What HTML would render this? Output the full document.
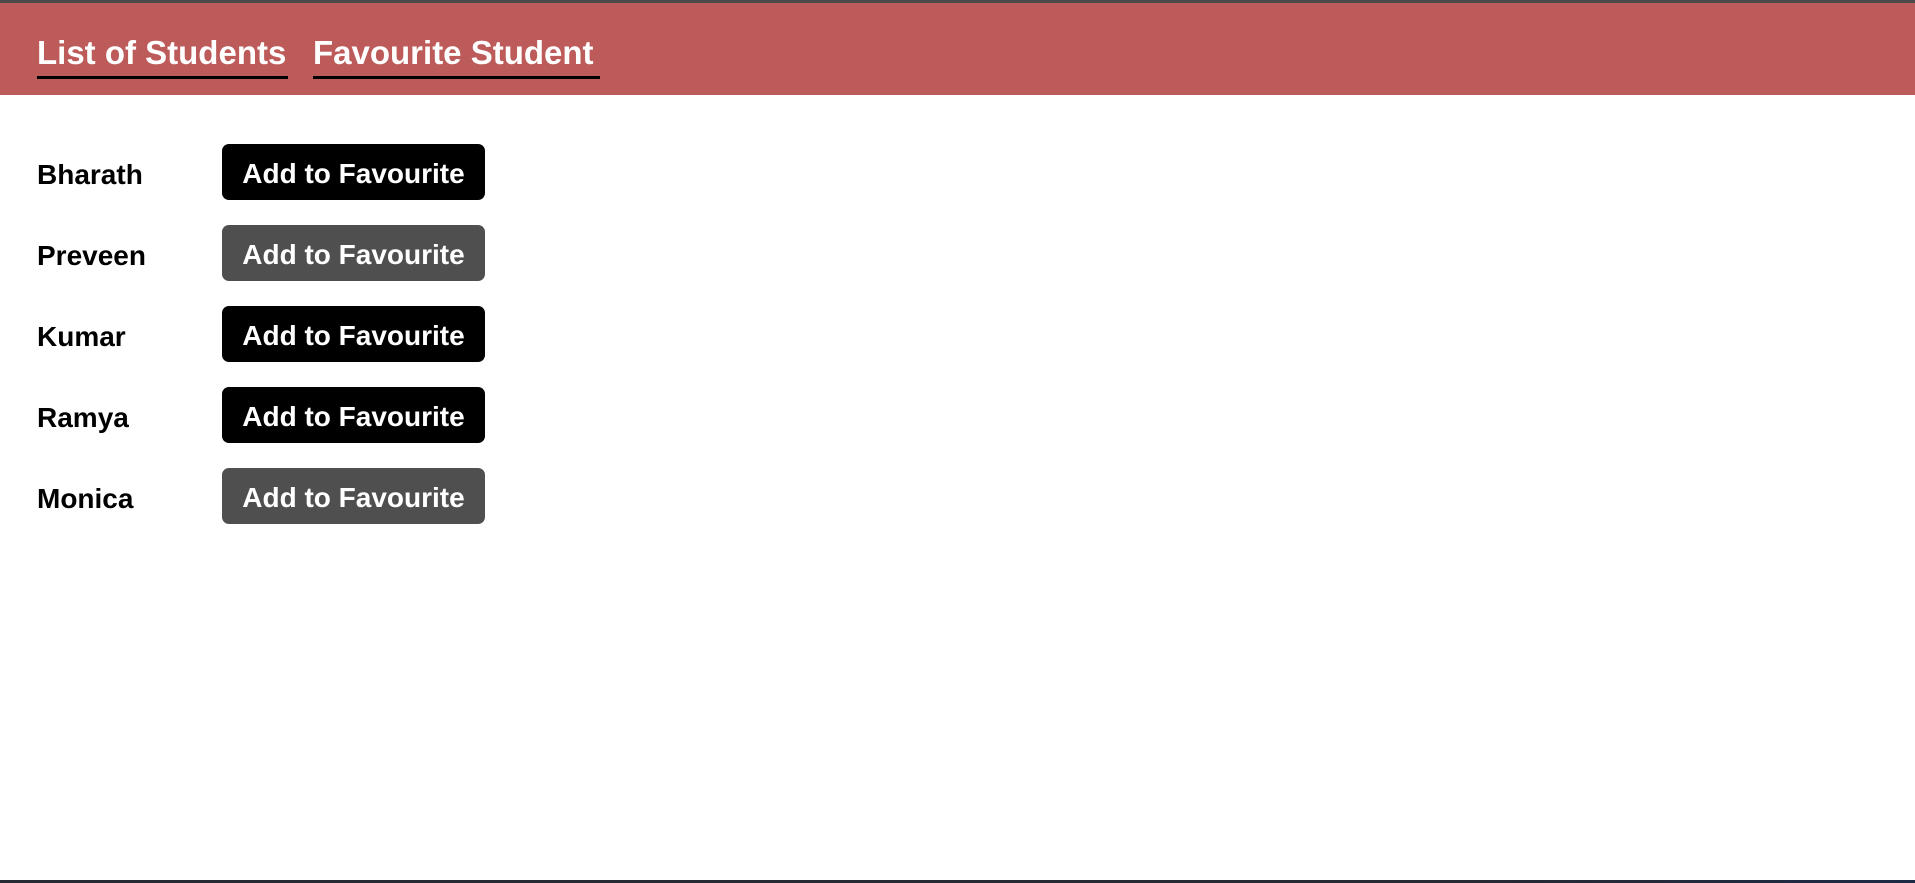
<!DOCTYPE html>
<html><head><style>
html,body{margin:0;padding:0;width:1915px;height:883px;overflow:hidden;background:#fff;font-family:"Liberation Sans",sans-serif;position:relative}
.top{position:absolute;left:0;top:0;width:1915px;height:3px;background:#4a4a4a}
.hdr{position:absolute;left:0;top:3px;width:1915px;height:92px;background:#bd5b5b}
.nav{position:absolute;top:33px;color:#fff;font-weight:bold;font-size:33px;line-height:40px;white-space:nowrap}
.ul{position:absolute;top:76px;height:3px;background:#000}
.row{position:absolute;left:0;height:56px;width:600px}
.name{position:absolute;left:37px;top:3px;line-height:56px;font-size:28px;font-weight:bold;color:#000}
.btn{position:absolute;left:222px;top:0;width:263px;height:56px;border-radius:7px;background:#000;color:#fff;font-size:28px;font-weight:bold;line-height:60px;text-align:center}
.g{background:#4f4f4f}
.bot{position:absolute;left:0;top:880px;width:1915px;height:3px;background:linear-gradient(90deg,#262a31,#262a31 75%,#1d2a45)}
</style></head><body>
<div class="top"></div>
<div class="hdr"></div>
<div class="nav" style="left:37px">List of Students</div>
<div class="ul" style="left:37px;width:251px"></div>
<div class="nav" style="left:313px">Favourite Student</div>
<div class="ul" style="left:313px;width:287px"></div>
<div class="row" style="top:144px"><div class="name">Bharath</div><div class="btn">Add to Favourite</div></div>
<div class="row" style="top:225px"><div class="name">Preveen</div><div class="btn g">Add to Favourite</div></div>
<div class="row" style="top:306px"><div class="name">Kumar</div><div class="btn">Add to Favourite</div></div>
<div class="row" style="top:387px"><div class="name">Ramya</div><div class="btn">Add to Favourite</div></div>
<div class="row" style="top:468px"><div class="name">Monica</div><div class="btn g">Add to Favourite</div></div>
<div class="bot"></div>
</body></html>
